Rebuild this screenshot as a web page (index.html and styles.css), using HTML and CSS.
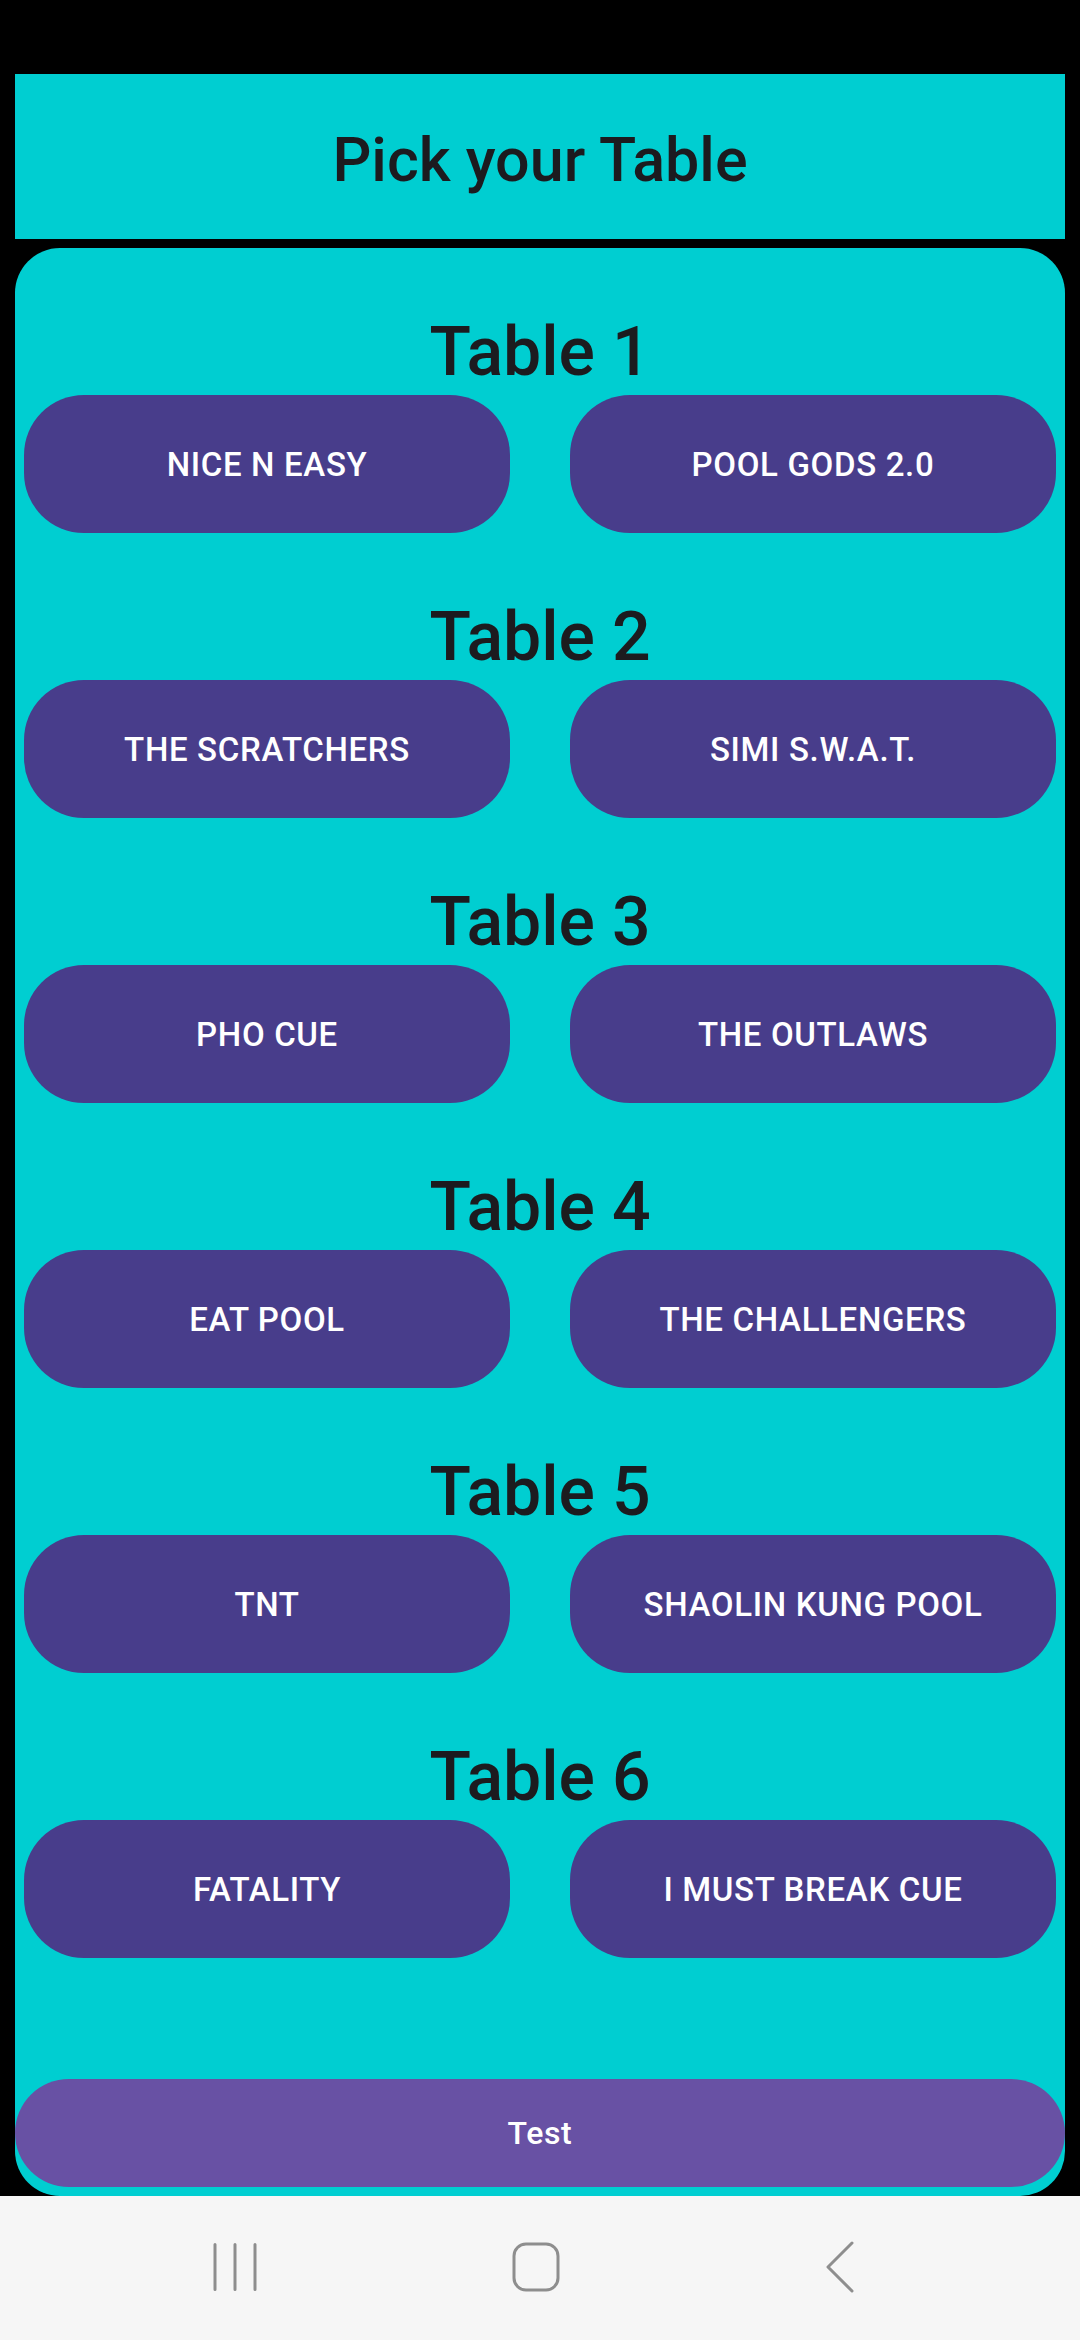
FILE: index.html
```html
<!DOCTYPE html>
<html>
<head>
<meta charset="utf-8">
<link rel="stylesheet" href="styles.css">
</head>
<body>
<div class="screen">
  <div class="statusbar"></div>
  <div class="app">
    <header class="header"><h1 class="title">Pick your Table</h1></header>
    <main class="card">
      <section class="table">
        <h2 class="table-name">Table 1</h2>
        <div class="teams"><button class="team">NICE N EASY</button><button class="team">POOL GODS 2.0</button></div>
      </section>
      <section class="table">
        <h2 class="table-name">Table 2</h2>
        <div class="teams"><button class="team">THE SCRATCHERS</button><button class="team">SIMI S.W.A.T.</button></div>
      </section>
      <section class="table">
        <h2 class="table-name">Table 3</h2>
        <div class="teams"><button class="team">PHO CUE</button><button class="team">THE OUTLAWS</button></div>
      </section>
      <section class="table">
        <h2 class="table-name">Table 4</h2>
        <div class="teams"><button class="team">EAT POOL</button><button class="team">THE CHALLENGERS</button></div>
      </section>
      <section class="table">
        <h2 class="table-name">Table 5</h2>
        <div class="teams"><button class="team">TNT</button><button class="team">SHAOLIN KUNG POOL</button></div>
      </section>
      <section class="table">
        <h2 class="table-name">Table 6</h2>
        <div class="teams"><button class="team">FATALITY</button><button class="team">I MUST BREAK CUE</button></div>
      </section>
      <button class="test">Test</button>
    </main>
  </div>
  <nav class="navbar">
    <svg class="nav-icon" width="60" height="60" viewBox="0 0 60 60">
      <path d="M10 6.5V51.5M30 6.5V51.5M50 6.5V51.5" stroke="#8e8e8e" stroke-width="3" stroke-linecap="round" fill="none"/>
    </svg>
    <svg class="nav-icon" width="60" height="60" viewBox="0 0 60 60">
      <rect x="8" y="6" width="44" height="46" rx="12" ry="12" stroke="#8e8e8e" stroke-width="3" fill="none"/>
    </svg>
    <svg class="nav-icon" width="60" height="60" viewBox="0 0 60 60">
      <path d="M42 5L18 29L42 53" stroke="#8e8e8e" stroke-width="3" stroke-linecap="round" stroke-linejoin="round" fill="none"/>
    </svg>
  </nav>
</div>
</body>
</html>
```
FILE: styles.css
```css
* { box-sizing: border-box; }
html, body { margin: 0; padding: 0; background: #000; }
body { font-family: Roboto, "Noto Sans", sans-serif; }
.screen { width: 1080px; height: 2340px; display: flex; flex-direction: column; background: #000; }
.statusbar { height: 74px; flex: none; }
.app { flex: none; height: 2122px; padding: 0 15px; display: flex; flex-direction: column; gap: 9px; }
.header { height: 165px; flex: none; background: #00ced1; display: flex; align-items: center; justify-content: center; box-shadow: 0 2px 0 rgba(0,0,0,0.12); }
.title { margin: 0; padding-top: 8px; font-size: 61px; font-weight: 500; color: #1c1b1f; line-height: 1; }
.card { flex: 1; background: #00ced1; border-radius: 45px; display: flex; flex-direction: column; padding-bottom: 9px; }
.table { padding-top: 64px; }
.table-name { margin: 0 0 3px; text-align: center; font-size: 68px; line-height: 80px; font-weight: 500; color: #1c1b1f; }
.teams { display: grid; grid-template-columns: 1fr 1fr; gap: 60px; padding: 0 9px; }
.team { height: 138px; border: 0; border-radius: 60px; background: #483d8b; color: #fff; font-family: Roboto, sans-serif; font-size: 33px; font-weight: 500; letter-spacing: 0.02em; padding: 0; }
.test { margin-top: auto; height: 108px; border: 0; border-radius: 54px; background: #6851a4; color: #fff; font-family: Roboto, sans-serif; font-size: 32px; font-weight: 500; letter-spacing: 0.02em; }
.navbar { flex: 1; background: #f6f6f6; display: flex; align-items: flex-start; padding-top: 42px; }
.nav-icon { flex: none; }
.nav-icon:nth-child(1) { margin-left: 205px; }
.nav-icon:nth-child(2) { margin-left: 241px; }
.nav-icon:nth-child(3) { margin-left: 244px; }
```
